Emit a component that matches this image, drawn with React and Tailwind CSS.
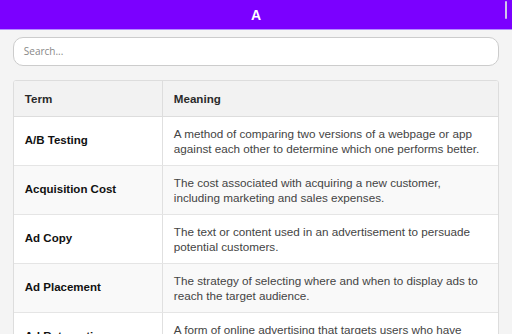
import React from "react";

const rows = [
  ["A/B Testing", "A method of comparing two versions of a webpage or app against each other to determine which one performs better."],
  ["Acquisition Cost", "The cost associated with acquiring a new customer, including marketing and sales expenses."],
  ["Ad Copy", "The text or content used in an advertisement to persuade potential customers."],
  ["Ad Placement", "The strategy of selecting where and when to display ads to reach the target audience."],
  ["Ad Retargeting", "A form of online advertising that targets users who have previously visited a website or used an app."],
];

export default function App() {
  return (
    <div className="h-[334px] overflow-hidden bg-[#f4f4f4] relative" style={{ fontFamily: '"Liberation Sans", Arial, sans-serif' }}>
      <div className="h-[30px] bg-[#7b00ff] border-b border-[#b48cff] flex items-center justify-center">
        <span className="text-white font-bold text-[14px] leading-none">A</span>
      </div>
      <div className="absolute right-[5px] top-[1px] w-[2px] h-[18px] bg-[#cfc6ea] rounded-full" />
      <div className="w-[95%] mx-auto pt-[7px]">
        <div className="h-[29px] bg-white border border-[#cccccc] rounded-[10px] flex items-center px-[10px]">
          <span className="text-[10px] text-[#888]" style={{ fontFamily: '"Open Sans", sans-serif' }}>Search...</span>
        </div>
        <div className="mt-[14px] border border-[#dddddd] rounded-t-[3px] bg-white overflow-hidden">
          <div className="grid grid-cols-[149px_1fr] bg-[#f2f2f2] border-b border-[#dddddd]">
            <div className="h-[35px] flex items-center px-[11px] text-[11.6px] font-bold text-[#2a2a2a] border-r border-[#dddddd]">Term</div>
            <div className="h-[35px] flex items-center px-[11px] text-[11.6px] font-bold text-[#2a2a2a]">Meaning</div>
          </div>
          {rows.map(([t, m], i) => (
            <div key={t} className={"grid grid-cols-[149px_1fr] border-b border-[#e5e5e5] " + (i % 2 === 1 ? "bg-[#f9f9f9]" : "bg-white")}>
              <div className="h-[48px] flex items-center px-[11px] text-[11.5px] font-bold text-[#111] border-r border-[#e0e0e0]">{t}</div>
              <div className="h-[48px] flex items-center px-[11px] text-[11.7px] leading-[15px] text-[#444]">{m}</div>
            </div>
          ))}
        </div>
      </div>
    </div>
  );
}
